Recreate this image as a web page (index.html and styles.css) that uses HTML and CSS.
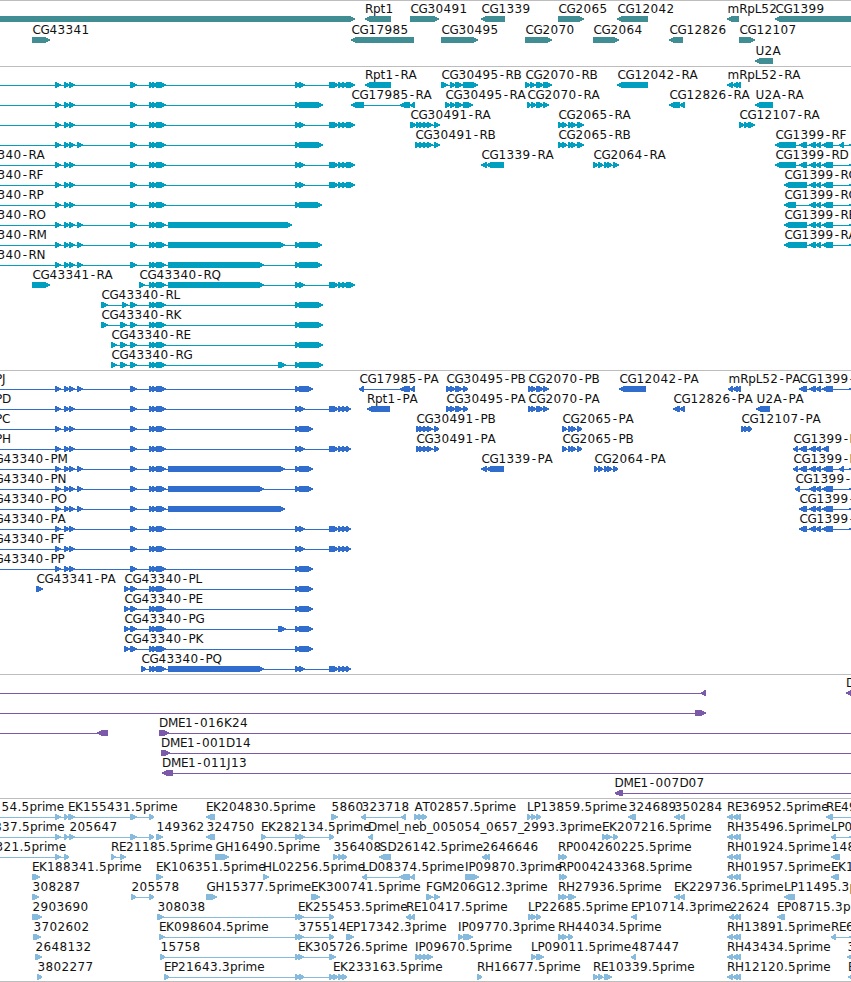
FILE: index.html
```html
<!DOCTYPE html>
<html lang="en">
<head>
<meta charset="utf-8">
<title>Genome browser</title>
<link rel="stylesheet" href="styles.css">
</head>
<body>
<main class="browser">
  <section class="track track-gene"><svg class="lane" id="genes"></svg></section>
  <section class="track track-rna"><svg class="lane" id="transcripts"></svg></section>
  <section class="track track-cds"><svg class="lane" id="proteins"></svg></section>
  <section class="track track-bac"><svg class="lane" id="clones"></svg></section>
  <section class="track track-est"><svg class="lane" id="ests"></svg></section>
</main>
<script src="tracks.js"></script>
</body>
</html>
```
FILE: styles.css
```css
body {
  margin: 0;
  background: #fff;
}

.browser {
  display: flex;
  flex-direction: column;
  width: 851px;
  overflow: hidden;
  border-bottom: 1px solid #bdbdbd;
}

.track {
  box-sizing: border-box;
  border-top: 1px solid #bdbdbd;
  overflow: hidden;
}

.track-gene { height: 66px; color: #408e93; }
.track-rna  { height: 304px; color: #009fc0; }
.track-cds  { height: 304px; color: #316dcd; }
.track-bac  { height: 124px; color: #7a5aa9; }
.track-est  { height: 183px; color: #86bbde; }

.lane {
  display: block;
  width: 100%;
  height: 100%;
  overflow: hidden;
}

.lane path {
  fill: currentColor;
  shape-rendering: crispEdges;
}

.lane text {
  fill: #111;
  font-family: "DejaVu Sans", sans-serif;
  font-size: 12px;
}
```
FILE: tracks.js
```js
// Horizontal advance of each label character, in pixels.
const ADVANCE = {
  '-': 7, '.': 4, '_': 5.4, A: 8, B: 8, C: 8, D: 9, E: 7, F: 7, G: 9, H: 9,
  I: 3.5, J: 4, K: 8, L: 6.5, M: 10, N: 9, O: 9, P: 7, Q: 9, R: 8, S: 8, T: 7,
  U: 9, b: 8, e: 7, i: 3, l: 3, m: 11.7, n: 8, p: 7.5, r: 5, t: 5
};

// Exon groups shared by several isoforms.
const P3 = '55-61 64-69 69-74.5 ';
const P4 = P3 + '77-82.5 ';
const G = '149-153 152-157 156-165.5 ';
const MG = '130-136.5 ' + G;
const S = '295-300 ';
const S2 = S + '299-304.5 ';
const E = '329-339 338-343 342-347 346-355';
const EP = '329-339 338-343 342-347 346-350.5';
const L = '-20-20 ';
const T = '809-816 815-821 822-833 ';
const C3 = '727-733 732-738 736-741';

// Each feature: row, label x, label, strand, exons.
const genes = [
  [0, 0, '', 1, '-20-355'], [1, 32, 'CG43341', 1, '32-50'],
  [0, 364.5, 'Rpt1', -1, '365-391'], [1, 351, 'CG17985', -1, '351-414'],
  [0, 410, 'CG30491', 1, '410-439'], [1, 441, 'CG30495', 1, '441-478'],
  [0, 481, 'CG1339', -1, '481-505'], [1, 525, 'CG2070', 1, '525-552'],
  [0, 558, 'CG2065', 1, '558-584'], [1, 593, 'CG2064', 1, '593-619'],
  [0, 617, 'CG12042', -1, '617-648'], [1, 669, 'CG12826', -1, '669-683'],
  [0, 727, 'mRpL52', -1, '727-739'], [1, 739, 'CG12107', 1, '739-755'],
  [2, 755, 'U2A', -1, '755-773'], [0, 775, 'CG1399', -1, '775-880']
];

const transcripts = [
  [0, 0, '', 1, L + P3 + MG + S2 + E],
  [1, 0, '', 1, L + P3 + MG + S + '299-323'],
  [2, 0, '', 1, L + P3 + MG + S2 + E],
  [3, 0, '', 1, L + P4 + MG + S + '299-323'],
  [4, -36, 'CG43340-RA', 1, L + P3 + MG + S2 + E],
  [5, -36, 'CG43340-RF', 1, L + P3 + MG + S2 + E],
  [6, -36, 'CG43340-RP', 1, L + P3 + MG + S + '299-322'],
  [7, -36, 'CG43340-RO', 1, L + P4 + MG + '168-292'],
  [8, -36, 'CG43340-RM', 1, L + P4 + MG + '168-285 ' + S + '299-322'],
  [9, -36, 'CG43340-RN', 1, L + P4 + MG + '168-264.4 ' + S + '299-322'],
  [10, 32, 'CG43341-RA', 1, '32-50'],
  [10, 139, 'CG43340-RQ', 1, '139-145 ' + G + '168-264.4 ' + S2 + E],
  [11, 101, 'CG43340-RL', 1, '101-108 122-128 ' + MG + S + '299-323'],
  [12, 101, 'CG43340-RK', 1, '101-108 120-126.5 ' + MG + S + '299-323'],
  [13, 111, 'CG43340-RE', 1, '111-117 120-126.5 ' + MG + S + '299-323'],
  [14, 111, 'CG43340-RG', 1, '111-117 120-126.5 ' + MG + '278-286 ' + S + '299-323'],
  [0, 364.5, 'Rpt1-RA', -1, '365-391'],
  [1, 351, 'CG17985-RA', -1, '351-364 399.5-410 410-415'],
  [2, 410, 'CG30491-RA', 1, '410-417 416-420 419-424 423-428 427-433 434-440'],
  [3, 415, 'CG30491-RB', 1, '415-420 419-424 423-428 427-433 434-440'],
  [0, 441, 'CG30495-RB', 1, '441-448 450-456 455-463 463-478'],
  [1, 445, 'CG30495-RA', 1, '445-451 450-456 455-463 463-473'],
  [0, 525, 'CG2070-RB', 1, '525-531 530-536 536-544 543-552'],
  [1, 527, 'CG2070-RA', 1, '527-531 531-536 536-544 543-549'],
  [0, 617, 'CG12042-RA', -1, '617-648'],
  [0, 727, 'mRpL52-RA', -1, C3],
  [1, 669, 'CG12826-RA', -1, '669-680 679-685'],
  [1, 755, 'U2A-RA', -1, '755-773'],
  [2, 739, 'CG12107-RA', 1, '739-744 744-750 748-755'],
  [2, 558, 'CG2065-RA', 1, '558-563 562-567 568-573 571-577 577-584'],
  [3, 558, 'CG2065-RB', 1, '558-563 562-567 568-573 571-577 577-584'],
  [4, 481, 'CG1339-RA', -1, '481-487 486-504'],
  [4, 593, 'CG2064-RA', 1, '593-598 598-603 604-608 607-612 613-619'],
  [3, 775, 'CG1399-RF', -1, '775-796 799-807 ' + T + '839-844 849-860'],
  [4, 775, 'CG1399-RD', -1, '775-796 799-807 ' + T + '849-860'],
  [5, 784, 'CG1399-RG', -1, '784-807 ' + T + '849-860'],
  [6, 784, 'CG1399-RC', -1, '784-796 ' + T + '849-860'],
  [7, 784, 'CG1399-RE', -1, '784-807 ' + T + '849-860'],
  [8, 784, 'CG1399-RA', -1, '784-807 ' + T + '849-860']
];

const proteins = [
  [0, -69.5, 'CG43340-PJ', 1, L + P4 + MG + S + '299-313'],
  [1, -69.5, 'CG43340-PD', 1, L + P3 + MG + S2 + EP],
  [2, -69.5, 'CG43340-PC', 1, L + P3 + MG + S + '299-313'],
  [3, -69.5, 'CG43340-PH', 1, L + P3 + MG + S2 + EP],
  [4, -14, 'CG43340-PM', 1, L + P4 + MG + '168-285 ' + S + '299-313'],
  [5, -14, 'CG43340-PN', 1, L + P4 + MG + '168-264.4 ' + S + '299-313'],
  [6, -14, 'CG43340-PO', 1, L + P4 + MG + '168-285'],
  [7, -14, 'CG43340-PA', 1, L + P3 + MG + S2 + EP],
  [8, -14, 'CG43340-PF', 1, L + P3 + MG + S2 + EP],
  [9, -14, 'CG43340-PP', 1, L + P3 + MG + S + '299-313'],
  [10, 36, 'CG43341-PA', 1, '36-42.5'],
  [10, 124, 'CG43340-PL', 1, '124-130 ' + MG + S + '299-313'],
  [11, 124, 'CG43340-PE', 1, '124-130 ' + MG + S + '299-313'],
  [12, 124, 'CG43340-PG', 1, '124-130 ' + MG + '278-286 ' + S + '299-313'],
  [13, 124, 'CG43340-PK', 1, '124-130 ' + MG + S + '299-313'],
  [14, 141, 'CG43340-PQ', 1, '141-146 ' + G + '168-264.4 ' + S2 + EP],
  [0, 359, 'CG17985-PA', -1, '359-364 399.5-410 410-415'],
  [1, 366.5, 'Rpt1-PA', -1, '367-390'],
  [2, 416, 'CG30491-PB', 1, '416-420 419-424 423-428 427-433 434-439'],
  [3, 416, 'CG30491-PA', 1, '416-420 419-424 423-428 427-433 434-439'],
  [0, 446, 'CG30495-PB', 1, '446-451 450-456 455-463 463-468'],
  [1, 446, 'CG30495-PA', 1, '446-451 450-456 455-463 463-468'],
  [0, 528, 'CG2070-PB', 1, '528-532 531-536 536-544 543-549'],
  [1, 528, 'CG2070-PA', 1, '528-532 531-536 536-544 543-549'],
  [0, 619, 'CG12042-PA', -1, '619-646'],
  [0, 728, 'mRpL52-PA', -1, '728-733 732-738 736-741'],
  [1, 673, 'CG12826-PA', -1, '673-680 679-685'],
  [1, 756, 'U2A-PA', -1, '756-770'],
  [2, 741, 'CG12107-PA', 1, '741-745 744-749 748-752'],
  [2, 562, 'CG2065-PA', 1, '562-567 568-573 571-576 577-582'],
  [3, 562, 'CG2065-PB', 1, '562-567 568-573 571-576 577-582'],
  [4, 481, 'CG1339-PA', -1, '481-487 486-504'],
  [4, 594, 'CG2064-PA', 1, '594-598 598-603 604-608 607-612 613-618'],
  [0, 799, 'CG1399-PF', -1, '799-807 ' + T + '849-860'],
  [3, 793, 'CG1399-PD', -1, '793-798 799-807 809-816 815-821 822-829'],
  [4, 793, 'CG1399-PE', -1, '793-798 799-807 ' + T + '839-844 849-860'],
  [5, 795, 'CG1399-PC', -1, '795-800 ' + T + '849-860'],
  [6, 799, 'CG1399-PB', -1, '799-807 ' + T + '849-860'],
  [7, 799, 'CG1399-PA', -1, '799-807 ' + T + '849-860']
];

const clones = [
  [0, 0, '', -1, L + '701-706'],
  [0, 845.5, 'D', -1, '846-857'],
  [1, 0, '', 1, L + '695-705.5'],
  [2, 0, '', -1, L + '97-108'],
  [2, 158.5, 'DME1-016K24', 1, '159-169 870-880'],
  [3, 160.5, 'DME1-001D14', 1, '161-170 870-880'],
  [4, 161.5, 'DME1-011J13', -1, '162-173 870-880'],
  [5, 614, 'DME1-007D07', -1, '614.5-623 870-880']
];

const ests = [
  [0, 1, '54.5prime', 1, L + '55-60.5 64-68.5'],
  [1, -6.5, '837.5prime', 1, L + '55-60.5 64-68.5'],
  [2, -5, '321.5prime', 1, L + '55-60.5 64-69'],
  [0, 67.5, 'EK155431.5prime', 1, '68-74.5 130-136.5 149-154'],
  [1, 69, '205647', 1, '69-74.5 130-136.5 149-154'],
  [2, 110.5, 'RE21185.5prime', 1, '111-115.5 120-126'],
  [3, 31.5, 'EK188341.5prime', 1, '32-40'],
  [4, 32, '308287', 1, '32-39'],
  [5, 32, '2903690', 1, '32-42'],
  [6, 33, '3702602', 1, '33-41'],
  [7, 35, '2648132', 1, '35-42'],
  [8, 37, '3802277', 1, '37-42'],
  [4, 131, '205578', 1, '131-136 149-154'],
  [1, 156, '149362', 1, '156-163'],
  [3, 155.5, 'EK106351.5prime', 1, '156-163'],
  [0, 205.5, 'EK204830.5prime', -1, '206-215'],
  [1, 206, '324750', -1, '206-215'],
  [1, 260.5, 'EK282134.5prime', 1, '261-266 295-300 299-305 329-334'],
  [2, 215, 'GH16490.5prime', 1, '215-229'],
  [3, 262.5, 'HL02256.5prime', 1, '263-269'],
  [4, 206, 'GH15377.5prime', 1, '206-217'],
  [5, 157, '308038', 1, '157-164 295-300'],
  [6, 158.5, 'EK098604.5prime', 1, '159-165 295-300'],
  [7, 160, '15758', 1, '160-165 295-300'],
  [8, 163.5, 'EP21643.3prime', 1, '164-169 295-300 299-304 329-334'],
  [5, 297.5, 'EK255453.5prime', 1, '298-304 329-334'],
  [6, 298, '375514', 1, '298-304 329-334'],
  [7, 297.5, 'EK305726.5prime', 1, '298-304 329-336'],
  [8, 332.5, 'EK233163.5prime', 1, '333-339 338-343 342-347'],
  [0, 331, '5860', 1, '331-338'],
  [0, 361, '323718', -1, '361-366 401-406'],
  [1, 367.5, 'Dmel_neb_005054_0657_2993.3prime', -1, '368-373'],
  [2, 333, '356408', 1, '333-339 338-343 342-347'],
  [2, 379, 'SD26142.5prime', -1, '379-391'],
  [3, 361.5, 'LD08374.5prime', -1, '362-367 399-410 410-415'],
  [4, 310.5, 'EK300741.5prime', 1, '311-320'],
  [5, 405.5, 'RE10417.5prime', -1, '406-411 410-415'],
  [6, 345.5, 'EP17342.3prime', 1, '346-354'],
  [0, 414, 'AT02857.5prime', 1, '414-419 418-423 422-427'],
  [2, 482, '2646646', -1, '482-487 486-490'],
  [3, 464.5, 'IP09870.3prime', 1, '465-479'],
  [4, 425.5, 'FGM206G12.3prime', 1, '426-433 434-440'],
  [6, 457.5, 'IP09770.3prime', 1, '458-463 463-473'],
  [7, 414.5, 'IP09670.5prime', 1, '415-420 419-424 423-428 427-433'],
  [8, 476.5, 'RH16677.5prime', 1, '477-482'],
  [0, 526.5, 'LP13859.5prime', 1, '527-531 531-536 536-541'],
  [2, 557.5, 'RP004260225.5prime', 1, '558-563 562-567'],
  [3, 558, 'RP004243368.5prime', 1, '559-563 562-567'],
  [4, 557.5, 'RH27936.5prime', 1, '558-563 562-568 568-576'],
  [5, 527.5, 'LP22685.5prime', 1, '528-532 531-536 536-541'],
  [6, 557.5, 'RH44034.5prime', 1, '558-563 562-568 568-573'],
  [7, 530.5, 'LP09011.5prime', 1, '531-536 536-544'],
  [0, 628, '324689', -1, '628-636'],
  [1, 601.5, 'EK207216.5prime', 1, '602-607 606-612 613-618'],
  [8, 592.5, 'RE10339.5prime', 1, '593-598 598-603 604-608 606-612'],
  [5, 630.5, 'EP10714.3prime', -1, '631-637'],
  [7, 631, '487447', -1, '631-636'],
  [0, 674, '350284', -1, '674-680 679-685'],
  [4, 673.5, 'EK229736.5prime', -1, '674-680 679-685'],
  [0, 726.5, 'RE36952.5prime', -1, C3],
  [1, 726.5, 'RH35496.5prime', -1, C3],
  [2, 726.5, 'RH01924.5prime', -1, C3],
  [3, 726.5, 'RH01957.5prime', -1, C3],
  [5, 729, '22624', -1, '729-734 733-738 737-741'],
  [6, 726.5, 'RH13891.5prime', -1, C3],
  [7, 726.5, 'RH43434.5prime', -1, C3],
  [8, 726.5, 'RH12120.5prime', -1, C3],
  [4, 783.5, 'LP11495.3prime', -1, '784-795'],
  [5, 776.5, 'EP08715.3prime', -1, '777-785'],
  [0, 825.5, 'RE49', -1, '826-833 856-862'],
  [1, 830.5, 'LP01', -1, '831-836 849-860'],
  [2, 831, '148', -1, '831-840'],
  [3, 830.5, 'EK1', -1, '831-839'],
  [6, 830.5, 'RE6', -1, '831-836 849-860'],
  [7, 847, '3', -1, '847-857'],
  [8, 847.5, 'E', -1, '848-858']
];

const NS = 'http://www.w3.org/2000/svg';

function add(svg, name, attrs) {
  const node = document.createElementNS(NS, name);
  for (const key in attrs) node.setAttribute(key, attrs[key]);
  svg.appendChild(node);
  return node;
}

// A six-pixel-high block whose strand end tapers to a point.
function block(a, b, y, strand) {
  const w = b - a;
  const tip = strand > 0 ? b : a;
  const tail = strand > 0 ? a : b;
  const shoulder = tip - strand * (w < 8 ? w * 0.75 : 5);
  const neck = tip - strand * Math.min(w * 0.3, 2);
  return `M${tail} ${y}H${shoulder}L${neck} ${y + 1.5}L${tip} ${y + 2.4}V${y + 3.6}` +
    `L${neck} ${y + 4.5}L${shoulder} ${y + 6}H${tail}Z`;
}

function draw(id, features, pitch) {
  const svg = document.getElementById(id);
  for (const [row, x, label, strand, spec] of features) {
    const top = row * pitch + 15;
    const exons = spec.trim().split(' ').map(s => {
      const m = s.match(/^(-?[\d.]+)-([\d.]+)$/);
      return [Number(m[1]), Number(m[2])];
    });
    if (exons.length > 1) {
      const from = exons[0][0] + 2;
      const to = exons[exons.length - 1][1] - 2;
      add(svg, 'path', { d: `M${from} ${top + 3}H${to}v1H${from}Z` });
    }
    let d = '';
    for (const [a, b] of exons) {
      if (a === -20 && b === 20) continue;
      d += block(a, b, top, strand);
    }
    add(svg, 'path', { d });
    if (!label) continue;
    let pen = x + 0.5;
    const xs = [];
    for (const ch of label) {
      xs.push(ch === '-' ? pen + 1.3 : pen);
      pen += ADVANCE[ch] || 8;
    }
    add(svg, 'text', { x: xs.join(' '), y: row * pitch + 12 }).textContent = label;
  }
}

draw('genes', genes, 21);
draw('transcripts', transcripts, 20);
draw('proteins', proteins, 20);
draw('clones', clones, 20);
draw('ests', ests, 20);
```
